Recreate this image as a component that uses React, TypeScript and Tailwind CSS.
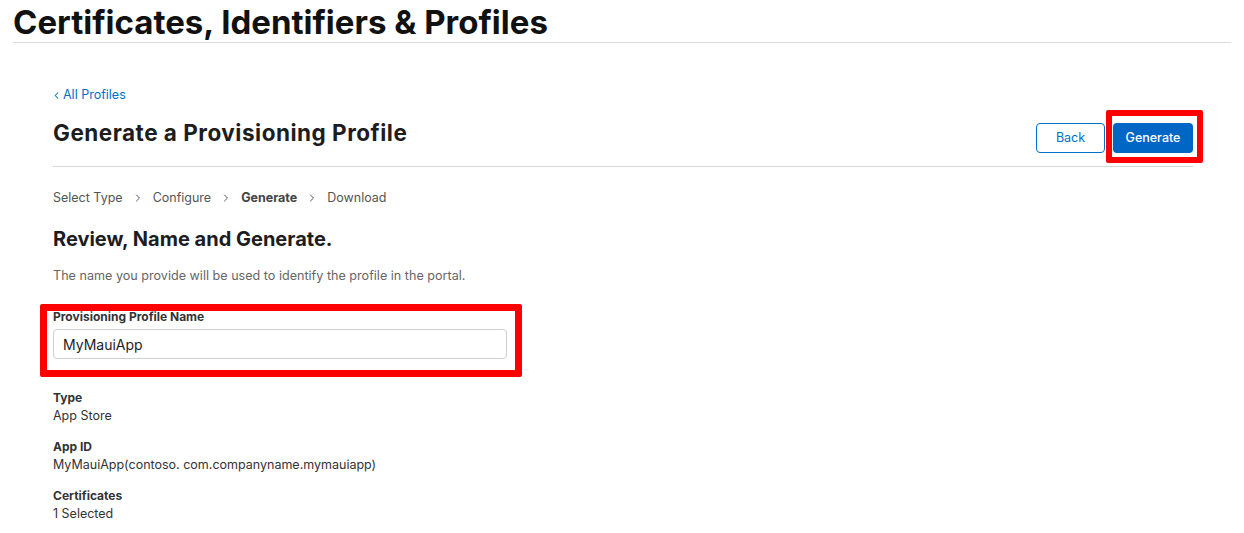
import { ChevronLeft, ChevronRight } from "lucide-react";

const details = [
  { label: "Type", value: "App Store" },
  { label: "App ID", value: "MyMauiApp(contoso. com.companyname.mymauiapp)" },
  { label: "Certificates", value: "1 Selected" },
];

const steps = ["Select Type", "Configure", "Generate", "Download"];

export default function App() {
  return (
    <div className="min-h-screen w-full bg-white text-[#1d1d1f] font-['Inter','Liberation_Sans',sans-serif]">
      {/* Top header */}
      <header className="mx-[13px] h-[43px] border-b border-[#dcdcdc]">
        <h1 className="pt-[5px] text-[33px] font-bold leading-[34px] text-[#111]">
          Certificates, Identifiers &amp; Profiles
        </h1>
      </header>

      <main className="ml-[53px] w-[1140px] pt-[44px]">
        <a href="#" className="flex items-center gap-[1px] text-[12.5px] leading-[16px] text-[#0070c9]">
          <ChevronLeft className="h-[11px] w-[11px] -ml-[2px]" strokeWidth={2.2} />
          All Profiles
        </a>

        {/* Title row */}
        <div className="mt-[15px] flex items-start justify-between border-b border-[#d6d6d6] pb-[13px]">
          <h2 className="text-[22.5px] font-bold leading-[30px] tracking-[0.5px] text-[#1d1d1f]">
            Generate a Provisioning Profile
          </h2>
          <div className="mt-[5px] flex items-center gap-[8px]">
            <button className="h-[30px] w-[69px] rounded-[4px] border border-[#0070c9] text-[12.5px] text-[#0070c9]">
              Back
            </button>
            <div className="relative">
              <button className="h-[30px] w-[80px] rounded-[4px] bg-[#0066c6] text-[12.5px] font-medium text-white">
                Generate
              </button>
              <div className="pointer-events-none absolute -left-[7px] -right-[10px] -top-[13px] -bottom-[10px] rounded-[2px] border-[6px] border-[#ff0000]" />
            </div>
          </div>
        </div>

        {/* Steps */}
        <nav className="mt-[23px] flex items-center text-[12.5px] leading-[16px] text-[#555]">
          {steps.map((s, i) => (
            <div key={s} className="flex items-center">
              <span className={s === "Generate" ? "font-bold text-[#444]" : ""}>{s}</span>
              {i < steps.length - 1 && (
                <ChevronRight className="mx-[9px] h-[12px] w-[12px] text-[#555]" strokeWidth={2} />
              )}
            </div>
          ))}
        </nav>

        <h3 className="mt-[20px] text-[20px] font-bold leading-[26px] text-[#1d1d1f]">
          Review, Name and Generate.
        </h3>
        <p className="mt-[16px] text-[12.6px] leading-[16px] text-[#666]">
          The name you provide will be used to identify the profile in the portal.
        </p>

        {/* Name field */}
        <div className="relative mt-[25px] w-[454px]">
          <label className="block text-[12px] font-bold leading-[16px] text-[#333]">
            Provisioning Profile Name
          </label>
          <input
            readOnly
            value="MyMauiApp"
            className="mt-[4px] h-[30px] w-full rounded-[4px] border border-[#cfcfcf] px-[9px] text-[14px] text-[#1d1d1f] outline-none"
          />
          <div className="pointer-events-none absolute -left-[13px] -right-[15px] -top-[5px] -bottom-[18px] rounded-[2px] border-[7px] border-[#ff0000]" />
        </div>

        {/* Details */}
        <div className="mt-[30px] flex flex-col gap-[13px]">
          {details.map((d) => (
            <div key={d.label}>
              <div className="text-[12px] font-bold leading-[18px] text-[#333]">{d.label}</div>
              <div className="text-[12.5px] leading-[18px] text-[#333]">{d.value}</div>
            </div>
          ))}
        </div>
      </main>
    </div>
  );
}
